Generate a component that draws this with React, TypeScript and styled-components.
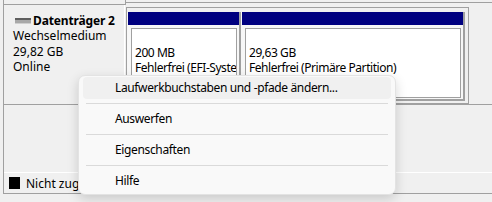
import styled, { createGlobalStyle } from 'styled-components'

const GlobalStyle = createGlobalStyle`
  html, body {
    margin: 0;
    padding: 0;
    background: #f0f0f0;
    font-family: "Noto Sans", "Open Sans", sans-serif;
    font-size: 12px;
    color: #000;
  }
`

const Page = styled.div`
  position: relative;
  width: 492px;
  height: 202px;
  overflow: hidden;
`

const DiskList = styled.div`
  margin-left: 3px;
  height: 194px;
  box-sizing: border-box;
  border-left: 1px solid #a0a0a0;
  border-bottom: 1px solid #a0a0a0;
  display: flex;
  flex-direction: column;
`

const PrevRow = styled.div`
  display: flex;
  height: 5px;
`

const PrevInfo = styled.div`
  width: 122px;
  box-sizing: border-box;
  border-right: 1px solid #a0a0a0;
  border-bottom: 1px solid #a0a0a0;
`

const PrevStrip = styled.div`
  flex: 1;
  height: 2px;
  border-bottom: 1px solid #a0a0a0;
`

const DiskRow = styled.div`
  display: flex;
  height: 100px;
  box-sizing: border-box;
  border-bottom: 1px solid #a0a0a0;
`

const DiskInfo = styled.div`
  width: 121px;
  border-right: 1px solid #fff;
  padding: 8px 0 0 9px;
  box-sizing: border-box;
  line-height: 15.3px;
  white-space: nowrap;
`

const DiskTitle = styled.div`
  display: flex;
  align-items: center;
  gap: 2px;
  padding-left: 2px;
  font-weight: 700;
  letter-spacing: -0.15px;
`

const Strip = styled.div`
  margin: 2px 0 0 1px;
  width: 343px;
  height: 97px;
  box-sizing: border-box;
  border: 1px solid #a0a0a0;
  background: #f0f0f0;
  padding: 4px 3px 2px 0;
  display: flex;
`

const Partition = styled.div<{ $width: number }>`
  width: ${({ $width }) => $width}px;
  box-sizing: border-box;
  padding-left: 1px;
  border-right: 2px solid #a0a0a0;
  border-bottom: 2px solid #a0a0a0;
  background: #f7f7f7;
  display: flex;
  flex-direction: column;
`

const PartitionHeader = styled.div`
  height: 13px;
  background: #000080;
`

const PartitionBody = styled.div`
  flex: 1;
  margin: 3px 2px 1px 3px;
  border: 1px solid #a0a0a0;
  background: #fff;
  padding: 16px 0 0 3px;
  line-height: 15px;
  letter-spacing: -0.45px;
  white-space: nowrap;
  overflow: hidden;
`

const Filler = styled.div`
  flex: 1;
`

const Legend = styled.div`
  height: 21px;
  box-sizing: border-box;
  border-top: 1px solid #fff;
  padding-left: 5px;
  display: flex;
  align-items: center;
  gap: 6px;
  white-space: nowrap;
`

const Swatch = styled.span`
  width: 11px;
  height: 12px;
  background: #000;
`

const Menu = styled.div`
  position: absolute;
  left: 78px;
  top: 75px;
  width: 318px;
  box-sizing: border-box;
  padding: 1px 4px 2px;
  background: #f9f9f9;
  border: 1px solid #e3e3e3;
  border-radius: 7px;
  box-shadow: 0 4px 12px rgba(0, 0, 0, 0.16);
`

const MenuItem = styled.div<{ $active?: boolean }>`
  height: 22px;
  line-height: 22px;
  padding-left: 32px;
  border-radius: 4px;
  letter-spacing: -0.36px;
  background: ${({ $active }) => ($active ? '#f0f0f0' : 'transparent')};
  white-space: nowrap;
`

const Separator = styled.div`
  height: 1px;
  margin: 4px 3px;
  background: #dadada;
`

function DriveIcon() {
  return (
    <svg width="16" height="6" viewBox="0 0 16 6">
      <rect x="0" y="0" width="16" height="2" fill="#5f5f5f" />
      <rect x="0" y="2" width="16" height="3" fill="#a8a8a8" />
      <rect x="0" y="5" width="16" height="1" fill="#cfcfcf" />
    </svg>
  )
}

const menuItems = ['Laufwerkbuchstaben und -pfade ändern...', 'Auswerfen', 'Eigenschaften', 'Hilfe']

export default function App() {
  return (
    <Page>
      <GlobalStyle />
      <DiskList>
        <PrevRow>
          <PrevInfo />
          <PrevStrip />
        </PrevRow>
        <DiskRow>
          <DiskInfo>
            <DiskTitle>
              <DriveIcon />
              <span>Datenträger 2</span>
            </DiskTitle>
            <div>Wechselmedium</div>
            <div>29,82 GB</div>
            <div>Online</div>
          </DiskInfo>
          <Strip>
            <Partition $width={114}>
              <PartitionHeader />
              <PartitionBody>
                <div>200 MB</div>
                <div>Fehlerfrei (EFI-Systempartition)</div>
              </PartitionBody>
            </Partition>
            <Partition $width={224}>
              <PartitionHeader />
              <PartitionBody>
                <div>29,63 GB</div>
                <div>Fehlerfrei (Primäre Partition)</div>
              </PartitionBody>
            </Partition>
          </Strip>
        </DiskRow>
        <Filler />
        <Legend>
          <Swatch />
          <span>Nicht zugeordnet</span>
        </Legend>
      </DiskList>
      <Menu>
        {menuItems.map((item, i) => (
          <div key={item}>
            {i > 0 && <Separator />}
            <MenuItem $active={i === 0}>{item}</MenuItem>
          </div>
        ))}
      </Menu>
    </Page>
  )
}
